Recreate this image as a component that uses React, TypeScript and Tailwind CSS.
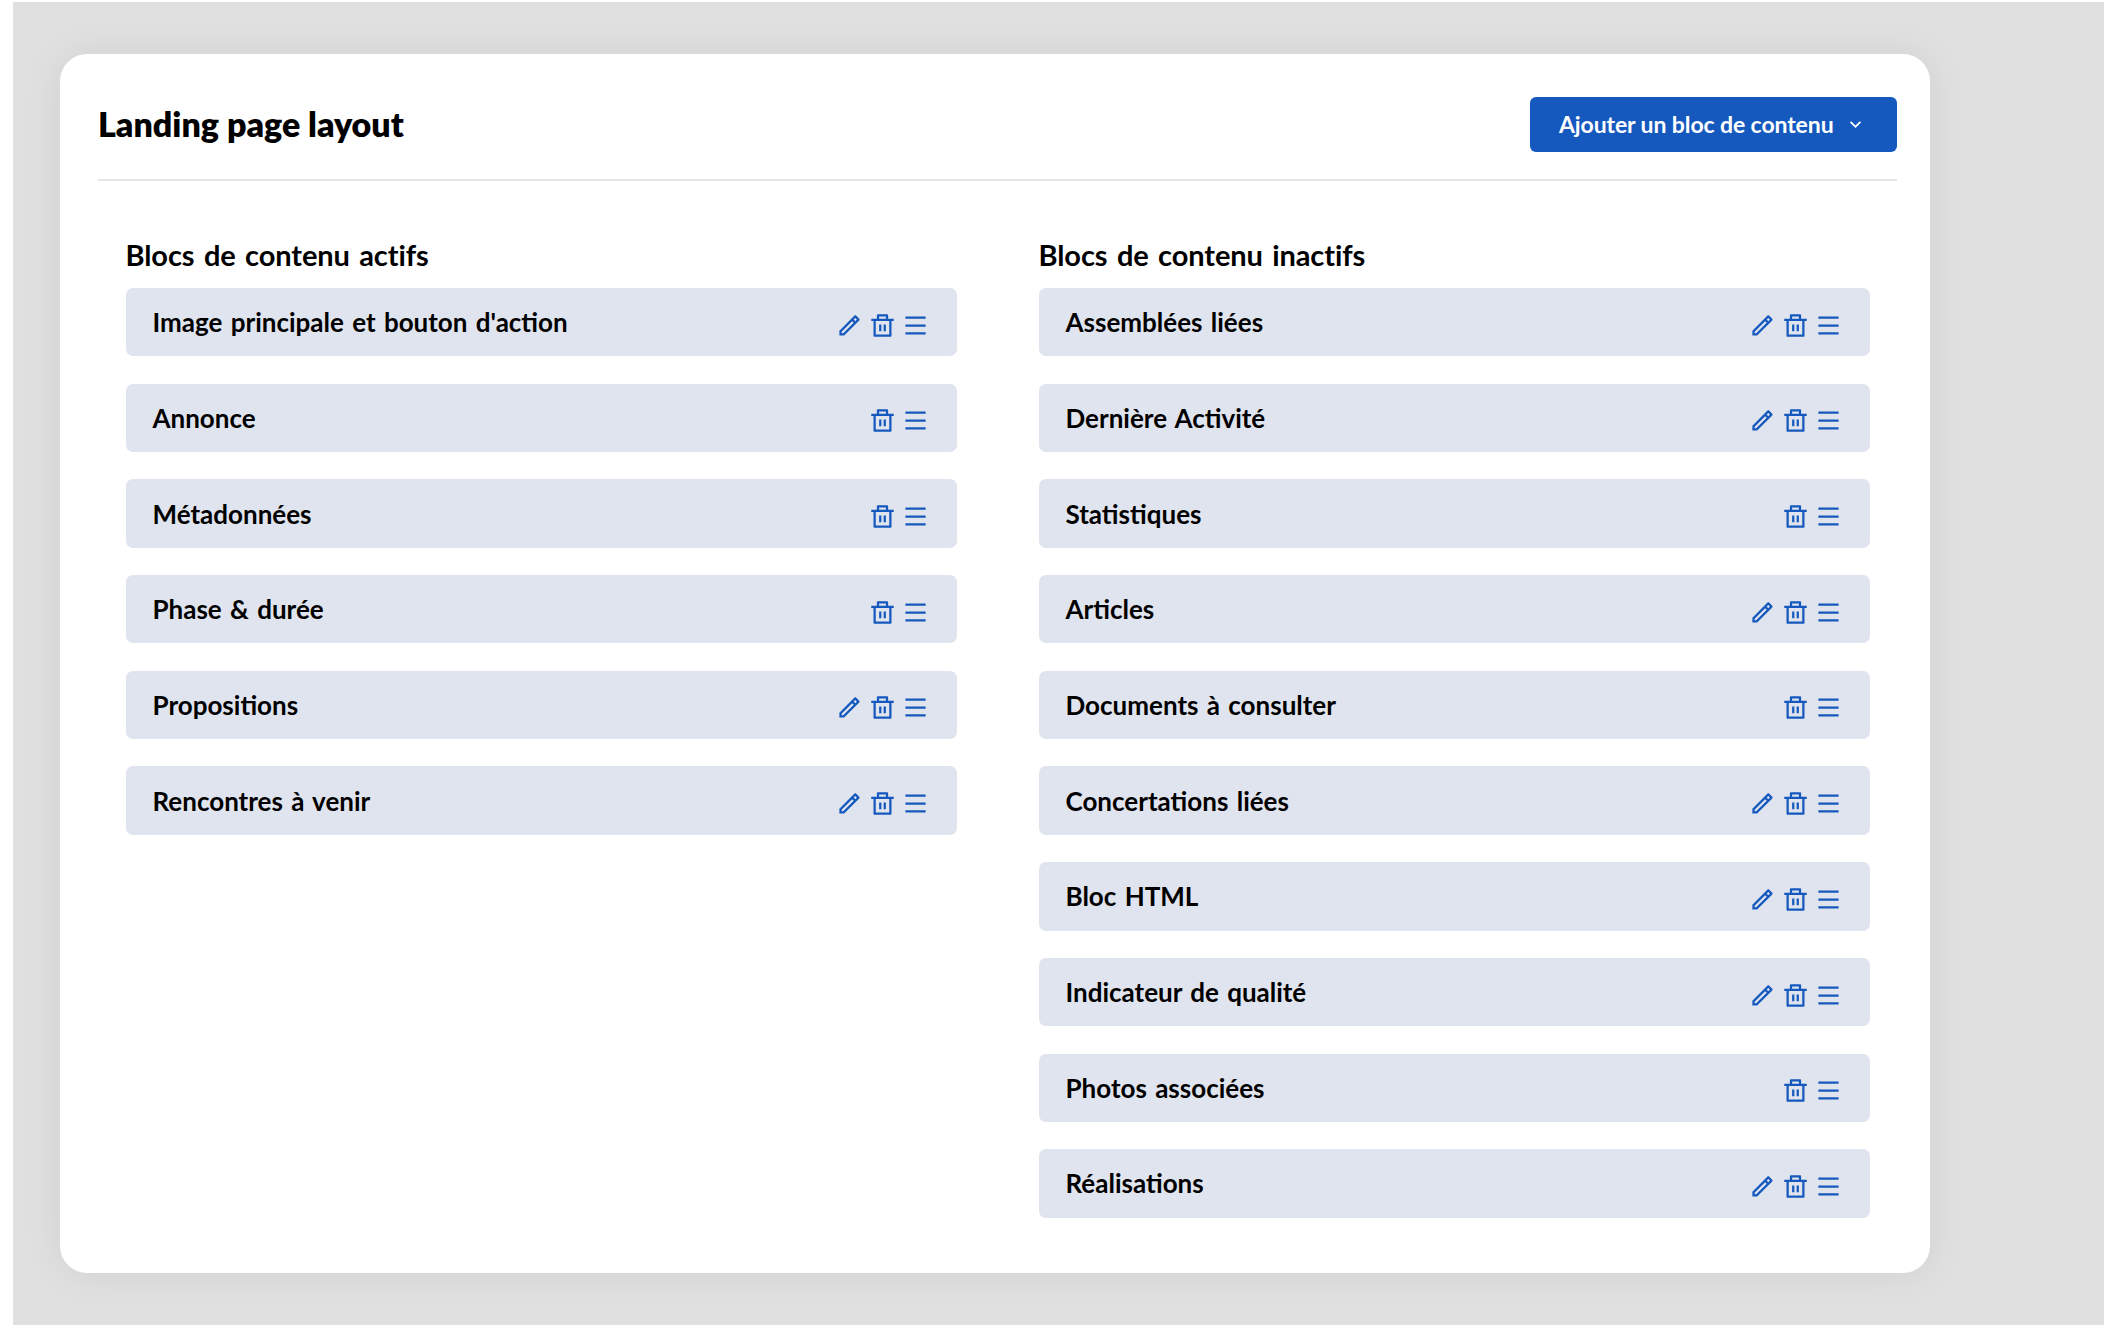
import { RiDeleteBinLine, RiPencilLine, RiMenuLine, RiArrowDownSLine } from "react-icons/ri";

const active: [string, boolean][] = [
  ["Image principale et bouton d'action", true],
  ["Annonce", false],
  ["Métadonnées", false],
  ["Phase & durée", false],
  ["Propositions", true],
  ["Rencontres à venir", true],
];
const inactive: [string, boolean][] = [
  ["Assemblées liées", true],
  ["Dernière Activité", true],
  ["Statistiques", false],
  ["Articles", true],
  ["Documents à consulter", false],
  ["Concertations liées", true],
  ["Bloc HTML", true],
  ["Indicateur de qualité", true],
  ["Photos associées", false],
  ["Réalisations", true],
];

function Row({ label, edit }: { label: string; edit: boolean }) {
  return (
    <div className="flex h-[68.4px] items-center justify-between rounded-[7px] bg-[#e0e4ee] pl-[27px] pr-[28px]">
      <span className="text-[26px] font-bold leading-[32px] text-black [word-spacing:2px]">{label}</span>
      <span className="mt-[6px] flex items-center gap-[6px] text-[#1558be]">
        {edit && <RiPencilLine size={27} />}
        <RiDeleteBinLine size={27} />
        <RiMenuLine size={27} />
      </span>
    </div>
  );
}

function Column({ title, rows }: { title: string; rows: [string, boolean][] }) {
  return (
    <div className="flex flex-col">
      <h2 className="mb-[14px] text-[29px] font-bold leading-[38px] tracking-[-0.1px] text-black [word-spacing:2.5px]">{title}</h2>
      <div className="flex flex-col gap-[27.3px]">
        {rows.map(([label, edit]) => (
          <Row key={label} label={label} edit={edit} />
        ))}
      </div>
    </div>
  );
}

export default function App() {
  return (
    <div className="h-[1340px] w-[2104px] overflow-hidden bg-white pl-[13px] pt-[2px] font-['Lato','Noto_Sans',sans-serif]">
      <div className="h-[1323px] bg-[#e0e0e0] pl-[47px] pt-[52px]">
        <div className="h-[1219px] w-[1870px] rounded-[27px] bg-white pl-[38px] pr-[33px] pt-[43px] shadow-[0_0_40px_rgba(0,0,0,0.07)]">
          <div className="flex items-center justify-between border-b-2 border-[#e6e6e6] pb-[27px]">
            <h1 className="-mt-[1px] text-[34px] font-extrabold leading-[40px] text-black">Landing page layout</h1>
            <button className="flex h-[55px] w-[367px] items-center rounded-[6px] bg-[#1558be] pl-[29px] text-[23px] font-bold tracking-[-0.1px] text-white">
              <span>Ajouter un bloc de contenu</span>
              <RiArrowDownSLine size={21} className="ml-auto mr-[31px]" />
            </button>
          </div>
          <div className="mt-[55px] grid grid-cols-2 gap-x-[82px] px-[27.5px]">
            <Column title="Blocs de contenu actifs" rows={active} />
            <Column title="Blocs de contenu inactifs" rows={inactive} />
          </div>
        </div>
      </div>
    </div>
  );
}
